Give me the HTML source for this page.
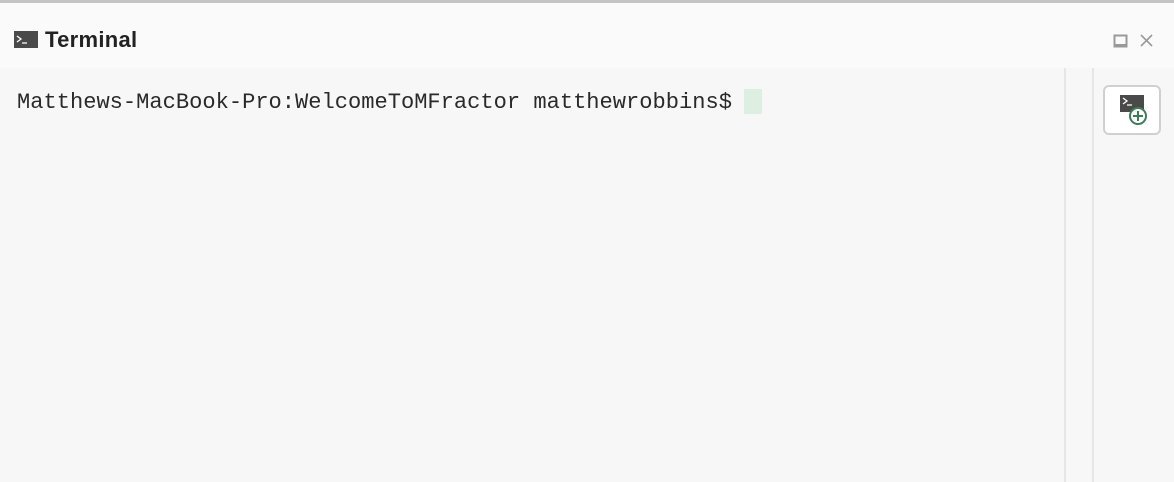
<html><head><style>
body{margin:0;width:1174px;height:482px;background:#f7f7f7;position:relative;overflow:hidden;font-family:"Liberation Sans",sans-serif}
.top{position:absolute;left:0;top:0;width:1174px;height:3px;background:#c4c4c4}
.hdr{position:absolute;left:0;top:3px;width:1174px;height:65px;background:#fafafa}
.ti{position:absolute;left:45px;top:27px;font-weight:bold;font-size:22px;color:#222;letter-spacing:0.3px}
.ico{position:absolute;left:14px;top:31px;width:24px;height:17px;background:#4a4a4a}
.txt{position:absolute;left:17px;top:90px;font-family:"Liberation Mono",monospace;font-size:22.07px;color:#2a2a2a;white-space:pre}
.cur{position:absolute;left:744px;top:89px;width:18px;height:25px;background:#dcefe0}
.v1{position:absolute;left:1064px;top:68px;width:2px;height:414px;background:#e6e6e6}
.v2{position:absolute;left:1092px;top:68px;width:2px;height:414px;background:#e6e6e6}
.btn{position:absolute;left:1103px;top:85px;width:54px;height:46px;border:2px solid #d0d0d0;border-radius:6px;background:#fff}
</style></head><body>
<div class="top"></div><div class="hdr"></div>
<div class="ico"><svg width="24" height="17"><path d="M3 5l4 3-4 3M8 12h5" stroke="#fff" stroke-width="1.3" fill="none"/></svg></div>
<div class="ti">Terminal</div>
<svg style="position:absolute;left:1113px;top:33px" width="16" height="16"><rect x="1.5" y="2.5" width="12" height="11" fill="none" stroke="#999" stroke-width="2"/><rect x="1" y="11" width="13" height="3" fill="#999"/></svg>
<svg style="position:absolute;left:1140px;top:34px" width="14" height="14"><path d="M1 1l11 11M12 1L1 12" stroke="#999" stroke-width="1.6"/></svg>
<div class="v1"></div><div class="v2"></div>
<div class="txt">Matthews-MacBook-Pro:WelcomeToMFractor matthewrobbins$</div>
<div class="cur"></div>
<div class="btn"><svg width="54" height="46"><rect x="15" y="8" width="24" height="17" fill="#4a4a4a"/><path d="M18 11l4 3-4 3M22 18h5" stroke="#fff" stroke-width="1.3" fill="none"/><circle cx="33" cy="29" r="8" fill="#fff" stroke="#3d7d5a" stroke-width="2"/><path d="M33 24v10M28 29h10" stroke="#3d7d5a" stroke-width="2"/></svg></div>
</body></html>
